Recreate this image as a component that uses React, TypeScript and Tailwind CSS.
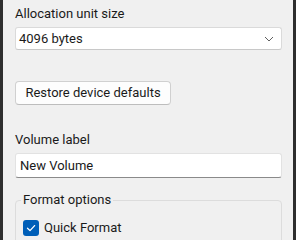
import React from "react";

export default function App() {
  return (
    <div
      className="w-[296px] h-[240px] overflow-hidden bg-[#f0f0f0] border-l-[3px] border-r-[3px] border-[#2e2e2e] flex flex-col pl-[12px] pr-[11px] text-[13px] leading-[18px] text-[#1a1a1a]"
      style={{ fontFamily: 'Roboto, Arial, sans-serif' }}
    >
      <div className="shrink-0 pt-[5px] h-[23px]">Allocation unit size</div>
      <div className="shrink-0 mt-[4px] h-[23px] bg-white border border-[#dadada] border-b-[#c8c8c8] rounded-[3px] flex items-center justify-between pl-[3px] pr-[7px]">
        <span>4096 bytes</span>
        <svg width="10" height="6" viewBox="0 0 10 6" fill="none">
          <path d="M1 1 L5 5 L9 1" stroke="#606060" strokeWidth="1" />
        </svg>
      </div>
      <div className="shrink-0 mt-[31px] flex">
        <button className="h-[24px] w-[156px] bg-[#fdfdfd] border border-[#d0d0d0] border-b-[#bdbdbd] rounded-[4px] flex items-center justify-center text-[13px] leading-[18px]">
          Restore device defaults
        </button>
      </div>
      <div className="shrink-0 mt-[26px] h-[18px]">Volume label</div>
      <div className="shrink-0 mt-[4px] h-[25px] bg-white border border-[#e2e2e2] border-b-[#8a8a8a] rounded-[3px] flex items-center pl-[4px]">
        New Volume
      </div>
      <fieldset className="shrink-0 mt-[13px] border border-[#dcdcdc] rounded-[4px] pl-[7px] pr-[7px] pb-[20px]">
        <legend className="ml-[-2px] px-[2px] leading-[18px]">Format options</legend>
        <div className="mt-[10px] flex items-center gap-[5px]">
          <div className="w-[16px] h-[16px] rounded-[3px] bg-[#005fb8] flex items-center justify-center">
            <svg width="12" height="12" viewBox="0 0 12 12" fill="none">
              <path d="M2.5 6.2 L5 8.6 L9.6 3.6" stroke="white" strokeWidth="1.3" strokeLinecap="round" strokeLinejoin="round" />
            </svg>
          </div>
          <span>Quick Format</span>
        </div>
      </fieldset>
    </div>
  );
}
